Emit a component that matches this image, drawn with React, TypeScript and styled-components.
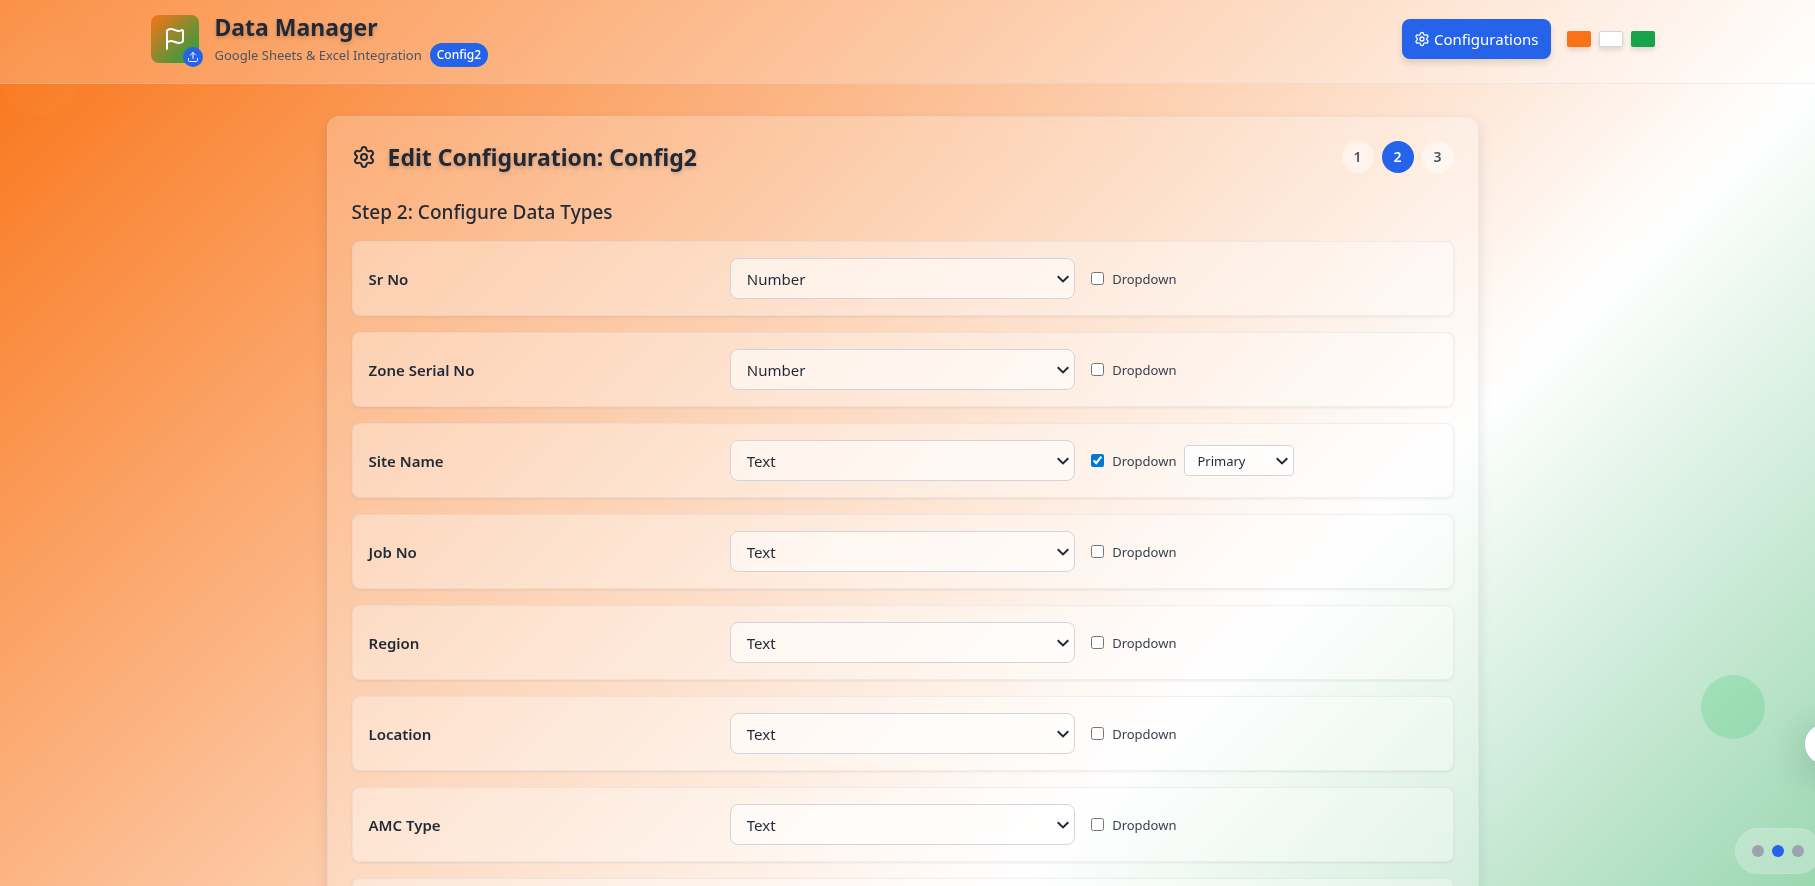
import React from "react";
import styled, { createGlobalStyle, css } from "styled-components";
import { Flag, Settings, Upload } from "lucide-react";

const GlobalStyle = createGlobalStyle`
  *, *::before, *::after { box-sizing: border-box; }
  html, body { margin: 0; padding: 0; }
  body {
    font-family: "Segoe UI", "Noto Sans", "Open Sans", sans-serif;
    color: #1f2937;
  }
  h1, h2, h3, p { margin: 0; }
  button, select, input { font-family: inherit; margin: 0; }
`;

const Page = styled.div`
  position: relative;
  height: 100vh;
  overflow: hidden;
  padding-right: 10px;
  background: linear-gradient(135deg, #f97316 0%, #ffffff 70%, #16a34a 140%);
`;

const Bubble = styled.div<{ $size: number; $color: string }>`
  position: absolute;
  width: ${(p) => p.$size}px;
  height: ${(p) => p.$size}px;
  border-radius: 50%;
  background: ${(p) => p.$color};
`;

const OrangeBubble = styled(Bubble)`
  top: 36px;
  left: 0;
`;

const GreenBubble = styled(Bubble)`
  top: 675px;
  right: 50px;
`;

const SideHandle = styled.button`
  position: absolute;
  top: 724px;
  right: -30px;
  width: 40px;
  height: 40px;
  padding: 0;
  border: 0;
  border-radius: 50%;
  background: #ffffff;
  box-shadow: 0 8px 40px rgba(0, 0, 0, 0.22);
`;

const TopBar = styled.header`
  position: relative;
  margin-right: -10px;
  padding: 12px 10px 17px 0;
  border-bottom: 1px solid rgba(220, 224, 232, 0.45);
  background: rgba(255, 255, 255, 0.22);
  background-clip: padding-box;
  backdrop-filter: blur(8px);
`;

const TopBarInner = styled.div`
  display: flex;
  align-items: center;
  justify-content: space-between;
  max-width: 1536px;
  height: 54px;
  margin: 0 auto;
  padding: 0 16px;
`;

const Group = styled.div<{ $gap: number }>`
  display: flex;
  align-items: center;
  gap: ${(p) => p.$gap}px;
`;

const Logo = styled.div`
  position: relative;
  display: flex;
  align-items: center;
  justify-content: center;
  width: 48px;
  height: 48px;
  border-radius: 8px;
  color: #ffffff;
  background: linear-gradient(135deg, #f97316, #16a34a);
`;

const LogoBadge = styled.span`
  position: absolute;
  right: -4px;
  bottom: -4px;
  display: flex;
  align-items: center;
  justify-content: center;
  width: 20px;
  height: 20px;
  border-radius: 50%;
  background: #2563eb;
`;

const Title = styled.h1`
  font-size: 23px;
  font-weight: 700;
  line-height: 32px;
  text-shadow: 0 2px 4px rgba(0, 0, 0, 0.2);
`;

const Subtitle = styled.div`
  display: flex;
  align-items: center;
  gap: 8px;
  height: 24px;
  font-size: 13px;
  color: #4b5563;
`;

const ConfigTag = styled.span`
  padding: 0 7px;
  border-radius: 12px;
  background: #2563eb;
  color: #ffffff;
  font-size: 12px;
  font-weight: 500;
  line-height: 24px;
`;

const PrimaryButton = styled.button`
  display: flex;
  align-items: center;
  gap: 4px;
  height: 40px;
  padding: 0 12px;
  border: 0;
  border-radius: 8px;
  background: #2563eb;
  color: #ffffff;
  font-size: 15px;
  box-shadow: 0 4px 6px rgba(0, 0, 0, 0.12);
`;

const Swatch = styled.span<{ $color: string; $outlined?: boolean }>`
  width: 24px;
  height: 16px;
  border-radius: 2px;
  background: ${(p) => p.$color};
  border: ${(p) => (p.$outlined ? "1px solid #d1d5db" : "0")};
  box-shadow: 0 3px 5px rgba(0, 0, 0, 0.12);
`;

const Card = styled.main`
  position: relative;
  max-width: 1152px;
  margin: 32px auto 0;
  padding: 24px;
  border: 1px solid rgba(220, 224, 232, 0.45);
  border-radius: 12px;
  background: rgba(255, 255, 255, 0.24);
  background-clip: padding-box;
  backdrop-filter: blur(16px);
  box-shadow: 0 6px 14px rgba(0, 0, 0, 0.1);
`;

const CardHeader = styled.div`
  display: flex;
  align-items: center;
  justify-content: space-between;
  height: 32px;
  margin-bottom: 24px;
`;

const CardTitle = styled.h2`
  font-size: 23px;
  font-weight: 700;
  line-height: 32px;
  text-shadow: 0 2px 4px rgba(0, 0, 0, 0.2);
`;

const StepDot = styled.span<{ $active?: boolean }>`
  width: 32px;
  height: 32px;
  border-radius: 50%;
  text-align: center;
  font-size: 14px;
  font-weight: 600;
  line-height: 32px;
  background: rgba(255, 255, 255, 0.45);
  color: #4b5563;
  ${(p) =>
    p.$active &&
    css`
      background: #2563eb;
      color: #ffffff;
    `}
`;

const StepHeading = styled.h3`
  margin-bottom: 14px;
  font-size: 19px;
  font-weight: 500;
  line-height: 30px;
`;

const RowList = styled.div`
  display: flex;
  flex-direction: column;
  gap: 16px;
`;

const Row = styled.div`
  display: grid;
  grid-template-columns: repeat(3, minmax(0, 1fr));
  align-items: center;
  gap: 16px;
  padding: 16px;
  border: 1px solid rgba(225, 228, 234, 0.5);
  border-radius: 8px;
  background: rgba(255, 255, 255, 0.33);
  background-clip: padding-box;
  box-shadow: 0 1px 3px rgba(0, 0, 0, 0.08);
`;

const FieldName = styled.label`
  font-size: 15px;
  font-weight: 600;
  line-height: 24px;
`;

const SelectBox = styled.span<{ $small?: boolean }>`
  position: relative;
  display: block;
  width: ${(p) => (p.$small ? "110px" : "100%")};
`;

const SelectArrow = styled.svg`
  position: absolute;
  top: 50%;
  right: 6px;
  width: 12px;
  height: 8px;
  margin-top: -4px;
  pointer-events: none;
`;

const NativeSelect = styled.select<{ $small?: boolean }>`
  display: block;
  width: 100%;
  height: 41px;
  padding: 0 16px;
  border: 1px solid #d1d5db;
  border-radius: 8px;
  appearance: none;
  background-color: rgba(255, 255, 255, 0.56);
  color: #1f2937;
  font-size: 15px;
  ${(p) =>
    p.$small &&
    css`
      height: 31px;
      padding: 0 12px;
      border-radius: 4px;
      background-color: rgba(255, 255, 255, 0.8);
      font-size: 13px;
    `}
`;

const CheckLabel = styled.label`
  display: flex;
  align-items: center;
  gap: 8px;
  font-size: 13px;
  line-height: 20px;
  color: #374151;
`;

const CheckBox = styled.input`
  width: 13px;
  height: 13px;
  accent-color: #0078d7;
`;

const Pager = styled.nav`
  position: absolute;
  right: -6px;
  bottom: 12px;
  display: flex;
  gap: 8px;
  padding: 16px;
  border: 1px solid rgba(229, 231, 235, 0.25);
  border-radius: 23px;
  background: rgba(255, 255, 255, 0.25);
`;

const PagerDot = styled.button<{ $active?: boolean }>`
  width: 12px;
  height: 12px;
  padding: 0;
  border: 0;
  border-radius: 50%;
  background: ${(p) => (p.$active ? "#2563eb" : "#9ca3af")};
`;

interface SelectProps extends React.ComponentProps<"select"> {
  small?: boolean;
}

const Select = ({ small, children, ...rest }: SelectProps) => (
  <SelectBox $small={small}>
    <NativeSelect $small={small} {...rest}>
      {children}
    </NativeSelect>
    <SelectArrow viewBox="0 0 12 8" fill="none" stroke="#1f2937" strokeWidth="2" aria-hidden="true">
      <path d="M0.7 1.2L6 6.4L11.3 1.2" />
    </SelectArrow>
  </SelectBox>
);

interface Field {
  name: string;
  type: "Number" | "Text";
  dropdown?: boolean;
}

const fields: Field[] = [
  { name: "Sr No", type: "Number" },
  { name: "Zone Serial No", type: "Number" },
  { name: "Site Name", type: "Text", dropdown: true },
  { name: "Job No", type: "Text" },
  { name: "Region", type: "Text" },
  { name: "Location", type: "Text" },
  { name: "AMC Type", type: "Text" },
];

const FieldRow = ({ field, id }: { field: Field; id: string }) => (
  <Row>
    <FieldName htmlFor={id}>{field.name}</FieldName>
    <Select id={id} defaultValue={field.type}>
      <option>Text</option>
      <option>Number</option>
    </Select>
    <Group $gap={8}>
      <CheckLabel>
        <CheckBox type="checkbox" defaultChecked={field.dropdown} />
        Dropdown
      </CheckLabel>
      {field.dropdown && (
        <Select small aria-label={`${field.name} dropdown level`}>
          <option>Primary</option>
        </Select>
      )}
    </Group>
  </Row>
);

export default function App() {
  return (
    <Page>
      <GlobalStyle />
      <OrangeBubble $size={80} $color="rgba(251, 146, 60, 0.15)" />
      <GreenBubble $size={64} $color="rgba(34, 197, 94, 0.2)" />
      <TopBar>
        <TopBarInner>
          <Group $gap={16}>
            <Logo>
              <Flag size={24} />
              <LogoBadge>
                <Upload size={12} />
              </LogoBadge>
            </Logo>
            <div>
              <Title>Data Manager</Title>
              <Subtitle>
                <span>Google Sheets &amp; Excel Integration</span>
                <ConfigTag>Config2</ConfigTag>
              </Subtitle>
            </div>
          </Group>
          <Group $gap={16}>
            <PrimaryButton type="button">
              <Settings size={16} />
              Configurations
            </PrimaryButton>
            <Group $gap={8}>
              <Swatch $color="#f97316" />
              <Swatch $color="#ffffff" $outlined />
              <Swatch $color="#16a34a" />
            </Group>
          </Group>
        </TopBarInner>
      </TopBar>
      <Card>
        <CardHeader>
          <Group $gap={12}>
            <Settings size={24} />
            <CardTitle>Edit Configuration: Config2</CardTitle>
          </Group>
          <Group $gap={8}>
            <StepDot>1</StepDot>
            <StepDot $active>2</StepDot>
            <StepDot>3</StepDot>
          </Group>
        </CardHeader>
        <StepHeading>Step 2: Configure Data Types</StepHeading>
        <RowList>
          {fields.map((field, i) => (
            <FieldRow key={field.name} field={field} id={`field-${i}`} />
          ))}
          <Row />
        </RowList>
      </Card>
      <SideHandle type="button" aria-label="Open panel" />
      <Pager aria-label="Steps">
        <PagerDot type="button" aria-label="Step 1" />
        <PagerDot type="button" aria-label="Step 2" $active />
        <PagerDot type="button" aria-label="Step 3" />
      </Pager>
    </Page>
  );
}
